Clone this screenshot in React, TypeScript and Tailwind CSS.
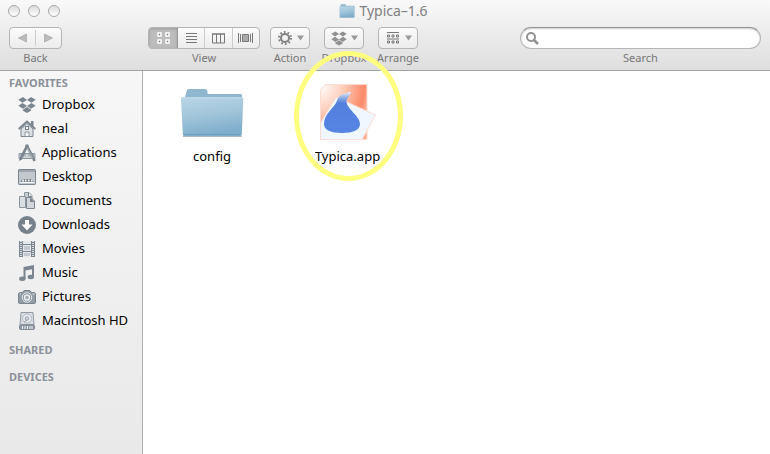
import type { ReactNode } from "react";

const slate = "#7a8590";

function DropboxGlyph({ color, className }: { color: string; className: string }) {
  return (
    <svg viewBox="0 0 18 16" className={className} fill={color} aria-hidden="true">
      <path d="M5 0 9 3 4.500 5.700 0.300 2.700z" />
      <path d="M13 0 9 3 13.500 5.700 17.700 2.700z" />
      <path d="M4.500 6 9 9 5 11.800 0.300 8.800z" />
      <path d="M13.500 6 9 9 13 11.800 17.700 8.800z" />
      <path d="M9 10 13.200 12.800V13.600L9 16 4.800 13.600V12.800z" />
    </svg>
  );
}

function SideIcon({ children }: { children: ReactNode }) {
  return (
    <svg viewBox="0 0 18 18" className="h-[18px] w-[18px] shrink-0" aria-hidden="true">
      {children}
    </svg>
  );
}

const favorites: { name: string; icon: ReactNode }[] = [
  { name: "Dropbox", icon: <DropboxGlyph color={slate} className="h-4 w-[18px] shrink-0" /> },
  {
    name: "neal",
    icon: (
      <SideIcon>
        <path d="M3 9 9 3.500 15 9v7.500H3z" fill="#dde1e5" stroke={slate} />
        <path d="M13 1h2.500v6L13 5z" fill={slate} />
        <path d="M.7 9 9 1.500 17.300 9" fill="none" stroke={slate} strokeWidth="2" />
        <path d="M7 12h4v4.500H7z" fill="#f3f4f5" stroke={slate} strokeWidth=".8" />
        <rect x="7.500" y="6.500" width="3" height="3" fill="#fff" stroke={slate} />
      </SideIcon>
    ),
  },
  {
    name: "Applications",
    icon: (
      <SideIcon>
        <path d="M1 9.500h16v5H1z" fill="#cbd0d5" stroke="#909aa3" />
        <path d="M3 10v2m2-2v3m2-3v2m4-2v2m2-2v3m2-3v2" stroke={slate} strokeWidth=".7" />
        <path d="M9 2 2.300 15.500" stroke={slate} strokeWidth="2.700" />
        <path d="m9 2 6.500 12.500 1 2.500" stroke={slate} strokeWidth="2.700" fill="none" />
        <path d="m9 3 5.800 11.500" stroke="#c6ccd1" strokeWidth=".7" />
        <path d="m2.300 14-1.500 3 3-1.500z" fill="#69757f" />
        <circle cx="9" cy="2" r="1.800" fill={slate} />
      </SideIcon>
    ),
  },
  {
    name: "Desktop",
    icon: (
      <SideIcon>
        <rect x=".5" y="1.500" width="17" height="15" rx=".7" fill="#c3c8ce" stroke="#7a8590" />
        <path d="M1 3h16" stroke={slate} />
        <path d="m4 11-2 3.500h14L14 11z" fill="#7a8590" />
        <path d="M4 11.500h2v2H4zm3 0h1.500v2H7zm3 0h1.500v2H10zm3 0h1.500v2H13z" fill="#eef0f2" />
        <path d="M2 14.500h14" stroke="#f5f6f7" />
      </SideIcon>
    ),
  },
  {
    name: "Documents",
    icon: (
      <SideIcon>
        <path d="M6.500 .5h4.500l3 3v9.500h-7.500z" fill="#c8cdd2" stroke="#8a949d" />
        <path d="M10.500 .5v4h3.500" fill="#eef0f1" stroke={slate} />
        <path d="M1.500 4.500h6v11h-6z" fill="#dadee2" stroke="#8b959e" />
        <path d="M8.500 5.500h4.500l3.500 3.500v7.500h-8z" fill="#d3d7dc" stroke={slate} />
        <path d="m12 5.500 4.500 4.500H12z" fill={slate} />
      </SideIcon>
    ),
  },
  {
    name: "Downloads",
    icon: (
      <SideIcon>
        <circle cx="9" cy="9" r="9" fill="#76818b" />
        <path d="M7 4h4v4.500h3.500L9 14.500 3.500 8.500H7z" fill="#fff" />
      </SideIcon>
    ),
  },
  {
    name: "Movies",
    icon: (
      <SideIcon>
        <rect x="1" y="1" width="16" height="16" fill={slate} />
        <path d="M5 1h8v3H5zm0 4h8v6H5zm0 7h8v5H5z" fill="#e6e9eb" />
        <path d="M6 6h6v4H6zm0 7h6v3H6z" fill="#c3c9cf" />
        <path d="M3 1v16M15 1v16" stroke="#fff" strokeWidth="1.500" strokeDasharray="1 1" />
      </SideIcon>
    ),
  },
  {
    name: "Music",
    icon: (
      <SideIcon>
        <path d="M5.500 3 16 1v12h-2V5.200L7.500 6.500V15h-2z" fill={slate} />
        <ellipse cx="4.300" cy="14.800" rx="3.200" ry="2.200" fill={slate} />
        <ellipse cx="12.800" cy="13" rx="3.200" ry="2.200" fill={slate} />
      </SideIcon>
    ),
  },
  {
    name: "Pictures",
    icon: (
      <SideIcon>
        <path d="M1.500 4.500h3L6 2.500h6l1.500 2h3l1 1V15l-1 .5h-15l-1-.5V5.500z" fill="#939da6" stroke={slate} />
        <circle cx="9" cy="9.500" r="4.700" fill="#7b8691" stroke="#eef0f2" />
        <circle cx="9" cy="9.500" r="2.600" fill="#a2abb3" stroke="#eef0f2" strokeWidth="1.500" />
        <path d="M14.500 6h2M2 6h1" stroke="#dce0e3" />
      </SideIcon>
    ),
  },
  {
    name: "Macintosh HD",
    icon: (
      <SideIcon>
        <path d="M3 .5h12l1 12H2z" fill="#d9dde1" stroke="#919ba4" />
        <circle cx="9" cy="6.500" r="4.500" fill="#eceef0" stroke="#b1b9c0" />
        <circle cx="9" cy="6.500" r="1.800" fill="#d4d8dc" stroke={slate} strokeWidth=".7" />
        <path d="m6 10 3-2" stroke="#939da6" />
        <rect x="1.500" y="13" width="15" height="4.500" rx="1" fill="#8f99a2" stroke="#808b95" />
        <path d="M4.500 14v3M7 14v3m2.500-3v3m2.500-3v3m2-3v3" stroke="#f5f6f7" />
      </SideIcon>
    ),
  },
];

const frame = "h-[22px] rounded border border-[#b4b4b4] bg-linear-to-b from-[#fbfbfb] to-[#ececec]";

function Tool({ label, width, children }: { label: string; width: string; children: ReactNode }) {
  return (
    <div className={`flex flex-col items-center ${width}`}>
      {children}
      <span className="whitespace-nowrap text-[11px] leading-[18px] text-[#777]">{label}</span>
    </div>
  );
}

function MenuButton({ label, children }: { label: string; children: ReactNode }) {
  return (
    <button type="button" aria-label={label} className={`${frame} flex w-full items-center justify-between pr-[5px] pl-[6px]`}>
      {children}
      <svg viewBox="0 0 7 6" className="h-[6px] w-[7px]" aria-hidden="true">
        <path d="M0 .5h7l-3.500 5z" fill="#999" />
      </svg>
    </button>
  );
}

function Folder({ className }: { className: string }) {
  return (
    <svg viewBox="0 0 64 50" className={className} preserveAspectRatio="none" aria-hidden="true">
      <defs>
        <linearGradient id="folder" x1="0" y1="0" x2=".25" y2="1">
          <stop offset="0" stopColor="#b9d5e6" />
          <stop offset=".5" stopColor="#a3c6db" />
          <stop offset="1" stopColor="#7faecb" />
        </linearGradient>
      </defs>
      <path d="M3 47.500h59v1.500H3z" fill="#8c9ba5" opacity=".7" />
      <path d="M5 9 7 2q.5-1 2-1h16q2 0 2.500 2v3H61q1 0 1 2v7H5z" fill="#8fb7ce" />
      <path d="M1 11q0-2 2-2h58q2.500 0 2.300 2l-1.500 35q0 2-1.800 2H4.500q-1.500 0-1.700-2z" fill="url(#folder)" />
      <path d="M2 10h60" stroke="#c3dbe9" />
      <path d="M3 46.500h58" stroke="#6c9ebd" />
    </svg>
  );
}

function TypicaIcon() {
  return (
    <svg viewBox="0 0 58 58" className="h-[58px] w-[58px]" aria-hidden="true">
      <defs>
        <radialGradient id="glow" cx="0" cy="0" r="1.050">
          <stop offset="0" stopColor="#fff" />
          <stop offset=".45" stopColor="#ffcfbd" />
          <stop offset=".9" stopColor="#fc8a69" />
          <stop offset="1" stopColor="#ffa78d" />
        </radialGradient>
        <linearGradient id="drop" x1="0" y1="0" x2="0" y2="1">
          <stop offset="0" stopColor="#eef4fc" />
          <stop offset=".12" stopColor="#9bb6e5" />
          <stop offset=".27" stopColor="#5380dd" />
          <stop offset="1" stopColor="#5785e5" />
        </linearGradient>
      </defs>
      <path d="M1.500 6.500 7 1.500h41v55H1.500z" fill="url(#glow)" stroke="#fcdcd2" />
      <path d="m17 14 39.500 18L43 56.500H1.500V40z" fill="#f0f7fe" stroke="#fbdcd5" />
      <path d="M32 9C25 10 20 12 18 17.500C16 25 5 30 5 41c0 6 7 9 18 9s18-3 18-9C41 33 28 26 27.500 19C27.300 15 31.500 13 32 9z" fill="url(#drop)" />
    </svg>
  );
}

function ViewControls() {
  return (
    <div role="group" aria-label="View" className={`${frame} flex w-full overflow-hidden text-[#777]`}>
      <button type="button" aria-label="Icon view" aria-pressed="true" className="flex w-[29px] items-center justify-center border-r border-[#999] bg-[#bdbdbd] shadow-[inset_0_1px_3px_#999]">
        <svg viewBox="0 0 13 12" className="h-3 w-[13px]" aria-hidden="true">
          <path d="M1 1h3v3H1zm8 0h3v3H9zM1 8h3v3H1zm8 0h3v3H9z" fill="#777" stroke="#fff" strokeWidth="1.500" />
        </svg>
      </button>
      <button type="button" aria-label="List view" className="flex flex-1 items-center justify-center border-r border-[#ccc]">
        <svg viewBox="0 0 11 11" className="h-[11px] w-[11px]" aria-hidden="true">
          <path d="M0 .5h11M0 3.500h11M0 6.500h11M0 9.500h11" stroke="currentColor" />
        </svg>
      </button>
      <button type="button" aria-label="Column view" className="flex flex-1 items-center justify-center border-r border-[#ccc]">
        <svg viewBox="0 0 13 11" className="h-[11px] w-[13px]" fill="none" stroke="currentColor" aria-hidden="true">
          <path d="M.5 1v9h12V1M4.500 1v9m4-9v9" />
          <path d="M0 1h13" strokeWidth="1.500" />
        </svg>
      </button>
      <button type="button" aria-label="Cover flow" className="flex flex-1 items-center justify-center">
        <svg viewBox="0 0 15 10" className="h-[10px] w-[15px]" stroke="currentColor" aria-hidden="true">
          <path d="M.5 0v10m2-9v8m10-8v8m2-9v10" />
          <path d="M4.500 1.500h6v7h-6z" fill="#aaa" />
        </svg>
      </button>
    </div>
  );
}

function WindowBar() {
  return (
    <header className="h-[71px] shrink-0 border-b border-[#a3a3a3] bg-linear-to-b from-[#f9f9f9] to-[#dedede]">
      <div className="grid h-[27px] grid-cols-[1fr_auto_1fr] items-start">
        <div className="flex gap-2 pt-[5px] pl-2">
          {["Close", "Minimize", "Zoom"].map((name) => (
            <button key={name} type="button" aria-label={name} className="h-3 w-3 rounded-full border border-[#a9a9a9] bg-linear-to-b from-[#dcdcdc] to-white" />
          ))}
        </div>
        <div className="flex h-[22px] items-center gap-1 pr-[3px]">
          <Folder className="h-[14px] w-4" />
          <h1 className="text-sm leading-5 text-[#808080]">Typica–1.6</h1>
        </div>
      </div>
      <div className="flex items-start pr-[9px] pl-[9px]">
        <Tool label="Back" width="w-[53px]">
          <div className={`${frame} flex w-full items-center`}>
            <button type="button" aria-label="Back" className="flex h-4 flex-1 items-center justify-center border-r border-[#ccc]">
              <svg viewBox="0 0 9 10" className="h-[10px] w-[9px]" aria-hidden="true"><path d="M8.500 1v8L.5 5z" fill="#bbb" stroke="#a5a5a5" strokeWidth=".7" /></svg>
            </button>
            <button type="button" aria-label="Forward" className="flex h-4 flex-1 items-center justify-center">
              <svg viewBox="0 0 9 10" className="h-[10px] w-[9px]" aria-hidden="true"><path d="M.5 1v8l8-4z" fill="#bbb" stroke="#a5a5a5" strokeWidth=".7" /></svg>
            </button>
          </div>
        </Tool>
        <div className="ml-[86px] flex gap-[10px]">
          <Tool label="View" width="w-[112px]"><ViewControls /></Tool>
          <div className="flex gap-[14px]">
            <Tool label="Action" width="w-10">
              <MenuButton label="Action">
                <svg viewBox="0 0 16 16" className="h-4 w-4" fill="none" stroke="#808080" aria-hidden="true">
                  <circle cx="8" cy="8" r="4" strokeWidth="2" />
                  <circle cx="8" cy="8" r="6" strokeWidth="2" strokeDasharray="1.700 2.070" />
                </svg>
              </MenuButton>
            </Tool>
            <Tool label="Dropbox" width="w-10">
              <MenuButton label="Dropbox"><DropboxGlyph color="#909090" className="h-[15px] w-4" /></MenuButton>
            </Tool>
            <Tool label="Arrange" width="w-10">
              <MenuButton label="Arrange">
                <svg viewBox="0 0 16 14" className="h-[14px] w-4" fill="none" stroke="#777" aria-hidden="true">
                  <path d="M2 1.500h12M2 8h12" />
                  <path d="M2.500 4h2v2h-2zm4.500 0h2v2H7zm4.500 0h2v2h-2zM2.500 10h2v2h-2zm4.500 0h2v2H7zm4.500 0h2v2h-2z" />
                </svg>
              </MenuButton>
            </Tool>
          </div>
        </div>
        <label className="ml-auto flex w-[241px] flex-col items-center">
          <span className="flex h-[22px] w-full items-center rounded-full border border-[#b5b5b5] border-t-[#929292] bg-white px-[5px] shadow-[inset_0_1px_2px_#ccc]">
            <svg viewBox="0 0 13 13" className="h-[13px] w-[13px]" fill="none" stroke="#929292" strokeWidth="2" aria-hidden="true">
              <circle cx="5" cy="5" r="4" />
              <path d="m8 8 4 4" strokeWidth="2.500" />
            </svg>
            <input type="text" className="min-w-0 flex-1 bg-transparent px-1 text-xs outline-none" />
          </span>
          <span className="text-[11px] leading-[18px] text-[#777]">Search</span>
        </label>
      </div>
    </header>
  );
}

export default function App() {
  return (
    <div className="flex min-h-screen flex-col bg-white font-['Noto_Sans','Open_Sans',sans-serif]">
      <WindowBar />
      <div className="flex flex-1">
        <nav aria-label="Sidebar" className="w-[143px] shrink-0 border-r border-[#b0b0b0] bg-linear-to-b from-[#f7f7f7] to-[#e9e9e9] pt-0.5">
          <h2 className="pl-[9px] text-[11px] leading-5 font-bold text-[#8b9199]">FAVORITES</h2>
          <ul>
            {favorites.map(({ name, icon }) => (
              <li key={name}>
                <a href="#" className="flex h-6 items-center gap-[6px] pl-[18px] text-[13px] whitespace-nowrap text-black">
                  {icon}
                  {name}
                </a>
              </li>
            ))}
          </ul>
          <h2 className="mt-[3px] pl-[9px] text-[11px] leading-[27px] font-bold text-[#8b9199]">SHARED</h2>
          <h2 className="pl-[9px] text-[11px] leading-[27px] font-bold text-[#8b9199]">DEVICES</h2>
        </nav>
        <main className="flex flex-1 items-start gap-[30px] pt-2 pl-4">
          <button type="button" className="flex w-[106px] flex-col items-center text-[13px] leading-5">
            <span className="flex h-[67px] items-center"><Folder className="h-[50px] w-16" /></span>
            config
          </button>
          <button type="button" className="relative flex w-[105px] flex-col items-center text-[13px] leading-5">
            <span className="flex h-[67px] items-center pb-[2px]"><TypicaIcon /></span>
            Typica.app
            <span className="pointer-events-none absolute -top-7 -left-px h-[130px] w-[109px] rounded-[50%] border-5 border-[#ffff80]" />
          </button>
        </main>
      </div>
    </div>
  );
}
